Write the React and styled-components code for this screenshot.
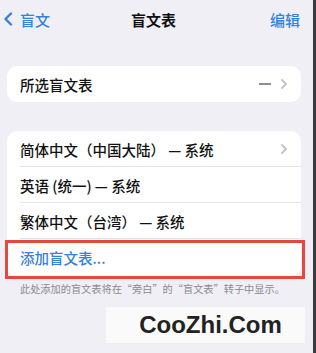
import React from 'react';
import styled, { createGlobalStyle } from 'styled-components';

const GlobalStyle = createGlobalStyle`
    html, body {
        margin: 0;
        padding: 0;
        background: #f0eff5;
    }
    body {
        font-family: "Noto Sans CJK SC", "Noto Sans", sans-serif;
        -webkit-font-smoothing: antialiased;
    }
`;

const BLUE = '#3580de';

const Chevron = ({ color = '#c2c2c7', size = 10 }) => (
    <svg width={size * 0.6} height={size} viewBox="0 0 6 10" fill="none">
        <path d="M1 1l4 4-4 4" stroke={color} strokeWidth="1.8" strokeLinecap="round" strokeLinejoin="round" />
    </svg>
);

const App = () => (
    <>
        <GlobalStyle />
        <Frame>
            <Screen>
                <NavBar>
                    <BackButton>
                        <svg width="11" height="14" viewBox="0 0 11 14" fill="none">
                            <path d="M8 1.5L2.5 7 8 12.5" stroke={BLUE} strokeWidth="2.4" strokeLinecap="round" strokeLinejoin="round" />
                        </svg>
                        <span>盲文</span>
                    </BackButton>
                    <Title>盲文表</Title>
                    <NavAction>编辑</NavAction>
                </NavBar>

                <Card $top={28}>
                    <Row>
                        <Label>所选盲文表</Label>
                        <Accessory>
                            <Dash />
                            <Chevron />
                        </Accessory>
                    </Row>
                </Card>

                <Card $top={29}>
                    <Row $divider>
                        <Label>简体中文（中国大陆） — 系统</Label>
                        <Accessory>
                            <Chevron />
                        </Accessory>
                    </Row>
                    <Row $divider>
                        <Label>英语 (统一) — 系统</Label>
                    </Row>
                    <Row $divider>
                        <Label>繁体中文（台湾） — 系统</Label>
                    </Row>
                    <AddRow>
                        <Label $blue>添加盲文表...</Label>
                        <Highlight />
                    </AddRow>
                </Card>

                <Footnote>此处添加的盲文表将在“旁白”的“盲文表”转子中显示。</Footnote>

                <Watermark>CooZhi.Com</Watermark>
            </Screen>
            <Edge />
        </Frame>
    </>
);

export default App;

const Frame = styled.div`
    display: flex;
    width: 316px;
    height: 353px;
    overflow: hidden;
`;

const Screen = styled.div`
    position: relative;
    flex: 1;
    background: #f0eff5;
`;

const Edge = styled.div`
    width: 3px;
    background: #3b3b3d;
`;

const NavBar = styled.header`
    display: grid;
    grid-template-columns: 1fr auto 1fr;
    align-items: center;
    height: 38px;
    padding: 0 13px 0 3px;
    font-size: 15px;
`;

const BackButton = styled.div`
    display: flex;
    align-items: center;
    gap: 6px;
    color: ${BLUE};
    font-weight: 500;
`;

const Title = styled.div`
    font-weight: 700;
    color: #111;
    transform: translateX(2px);
`;

const NavAction = styled.div`
    justify-self: end;
    color: ${BLUE};
    font-weight: 500;
`;

const Card = styled.section`
    margin: ${({ $top }) => $top}px 12px 0 7px;
    background: #fff;
    border-radius: 10px;
`;

const Row = styled.div`
    display: flex;
    align-items: center;
    justify-content: space-between;
    height: 36px;
    padding: 0 14px 0 13px;
    box-shadow: ${({ $divider }) => ($divider ? 'inset 0 -1px 0 #e6e6ea' : 'none')};
    margin-left: ${({ $divider }) => ($divider ? '13px' : '0')};
    padding-left: ${({ $divider }) => ($divider ? '0' : '13px')};
`;

const AddRow = styled.div`
    position: relative;
    display: flex;
    align-items: center;
    height: 37px;
    padding: 0 13px;
`;

const Highlight = styled.div`
    position: absolute;
    left: -2px;
    right: -4px;
    top: 1px;
    bottom: -3px;
    border: 3px solid #e5483d;
    pointer-events: none;
`;

const Label = styled.span`
    font-size: 14.5px;
    font-weight: 500;
    color: ${({ $blue }) => ($blue ? BLUE : '#111')};
    white-space: nowrap;
`;

const Accessory = styled.div`
    display: flex;
    align-items: center;
    gap: 10px;
`;

const Dash = styled.span`
    width: 12px;
    height: 1.5px;
    background: #8e8e93;
`;

const Footnote = styled.p`
    margin: 5px 0 0 20px;
    font-size: 10.2px;
    color: #8a8a8f;
    white-space: nowrap;
`;

const Watermark = styled.div`
    position: absolute;
    left: 106px;
    top: 307px;
    width: 199px;
    height: 36px;
    display: flex;
    align-items: center;
    justify-content: center;
    padding-left: 10px;
    box-sizing: border-box;
    background: #fafafa;
    font-family: "Liberation Sans", Arial, sans-serif;
    font-weight: 700;
    font-size: 24px;
    color: #222;
`;
